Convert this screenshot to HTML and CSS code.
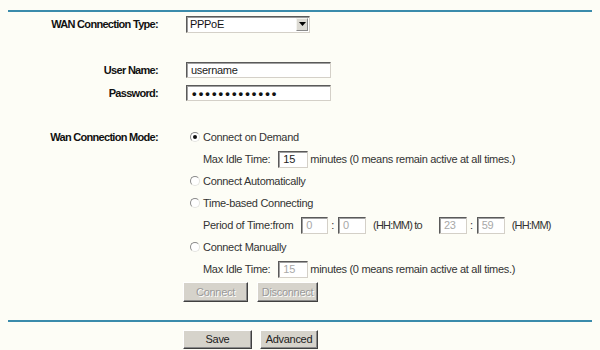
FILE: index.html
```html
<!DOCTYPE html>
<html>
<head>
<meta charset="utf-8">
<link rel="stylesheet" href="styles.css">
</head>
<body>
<div class="page">
  <div class="rule"></div>
  <div class="form">
    <div class="row row-top">
      <div class="label">WAN Connection Type:</div>
      <div class="field">
        <div class="select">
          <span class="select-value">PPPoE</span>
          <span class="select-btn"><svg width="7" height="4" viewBox="0 0 7 4"><path d="M0 0H7L3.5 4Z" fill="#000"/></svg></span>
        </div>
      </div>
    </div>
    <div class="spacer"></div>
    <div class="row row-tall">
      <div class="label">User Name:</div>
      <div class="field"><span class="textbox wide">username</span></div>
    </div>
    <div class="row">
      <div class="label">Password:</div>
      <div class="field"><span class="textbox wide dots">•••••••••••••</span></div>
    </div>
    <div class="spacer"></div>
    <div class="row">
      <div class="label">Wan Connection Mode:</div>
      <div class="field"><span class="radio checked"></span><span>Connect on Demand</span></div>
    </div>
    <div class="row">
      <div></div>
      <div class="field indent"><span>Max Idle Time:</span><span class="textbox small gap-l">15</span><span class="after">minutes (0 means remain active at all times.)</span></div>
    </div>
    <div class="row">
      <div></div>
      <div class="field"><span class="radio"></span><span>Connect Automatically</span></div>
    </div>
    <div class="row">
      <div></div>
      <div class="field"><span class="radio"></span><span>Time-based Connecting</span></div>
    </div>
    <div class="row">
      <div></div>
      <div class="field indent">
        <span>Period of Time:from</span>
        <span class="textbox tiny disabled b1">0</span>
        <span class="colon">:</span>
        <span class="textbox tiny disabled">0</span>
        <span class="hh">(HH:MM) to</span>
        <span class="textbox tiny disabled b3">23</span>
        <span class="colon">:</span>
        <span class="textbox tiny disabled">59</span>
        <span class="hh">(HH:MM)</span>
      </div>
    </div>
    <div class="row">
      <div></div>
      <div class="field"><span class="radio"></span><span>Connect Manually</span></div>
    </div>
    <div class="row">
      <div></div>
      <div class="field indent"><span>Max Idle Time:</span><span class="textbox small gap-l disabled">15</span><span class="after">minutes (0 means remain active at all times.)</span></div>
    </div>
    <div class="row row-btn">
      <div></div>
      <div class="field buttons">
        <span class="btn disabled w-connect">Connect</span>
        <span class="btn disabled w-disconnect">Disconnect</span>
      </div>
    </div>
  </div>
  <div class="rule rule-bottom"></div>
  <div class="actions">
    <div></div>
    <div class="buttons">
      <span class="btn w-save">Save</span>
      <span class="btn w-adv">Advanced</span>
    </div>
  </div>
</div>
</body>
</html>
```

FILE: styles.css
```css
html, body {
  margin: 0;
  padding: 0;
  background: #fdfdf6;
}
body {
  font-family: "Liberation Sans", Arial, sans-serif;
  font-size: 11px;
  color: #333;
  letter-spacing: -0.3px;
}
.page {
  padding: 10px 8px 0 8px;
}
.rule {
  height: 2px;
  background: #3b8bab;
}
.rule-bottom {
  margin-top: 16px;
}
.form {
  display: flex;
  flex-direction: column;
}
.row, .actions {
  display: grid;
  grid-template-columns: 150px 1fr;
  column-gap: 25px;
  align-items: center;
  height: 22px;
}
.row-top { height: 24px; }
.row-tall { height: 24px; }
.row-btn { height: 24px; }
.spacer { height: 22px; }
.label {
  text-align: right;
  font-weight: bold;
  color: #111;
  letter-spacing: -0.7px;
}
.field {
  display: flex;
  align-items: center;
  white-space: nowrap;
}
.indent { padding-left: 20px; }

.select {
  margin-left: 3px;
  width: 124px;
  height: 17px;
  box-sizing: border-box;
  background: #fff;
  border: 1px solid;
  border-color: #5a5a5a #d4d0c8 #d4d0c8 #5a5a5a;
  box-shadow: inset 1px 1px 0 #9a9a9a;
  display: flex;
  align-items: center;
  justify-content: space-between;
  padding: 0 1px 0 3px;
}
.select-value { color: #111; }
.select-btn {
  width: 12px;
  height: 13px;
  box-sizing: border-box;
  background: #dcdad3;
  border: 1px solid;
  border-color: #f4f4f0 #8a8a8a #8a8a8a #f4f4f0;
  display: flex;
  align-items: center;
  justify-content: center;
}

.textbox {
  display: inline-flex;
  align-items: center;
  box-sizing: border-box;
  height: 17px;
  background: #fff;
  border: 1px solid;
  border-color: #5a5a5a #d4d0c8 #d4d0c8 #5a5a5a;
  box-shadow: inset 1px 1px 0 #a0a0a0;
  padding-left: 4px;
  color: #222;
}
.wide {
  margin-left: 3px;
  width: 145px;
  height: 16px;
}
.dots {
  font-size: 13px;
  font-weight: bold;
  letter-spacing: 2.1px;
  color: #111;
  padding-left: 5px;
  line-height: 1;
}
.small { width: 30px; }
.tiny { width: 28px; }
.gap-l { margin-left: 8px; }
.after { margin-left: 2px; }
.disabled { color: #a8a8a8; }
.b1 { margin-left: 8px; width: 27px; }
.b3 { margin-left: 17px; }
.colon { margin: 0 4px 0 3px; }
.hh { margin-left: 7px; letter-spacing: -0.8px; }

.radio {
  width: 10px;
  height: 10px;
  box-sizing: border-box;
  border-radius: 50%;
  border: 1px solid;
  border-color: #8a8a8a #e4e4e0 #e4e4e0 #8a8a8a;
  background: #fff;
  margin-left: 7px;
  margin-right: 3px;
  position: relative;
}
.radio.checked::after {
  content: "";
  position: absolute;
  left: 2px;
  top: 2px;
  width: 4px;
  height: 4px;
  border-radius: 50%;
  background: #111;
}

.buttons {
  display: flex;
  align-items: center;
}
.btn {
  box-sizing: border-box;
  height: 20px;
  display: inline-flex;
  align-items: center;
  justify-content: center;
  background: #d6d3cb;
  border: 1px solid;
  border-color: #ffffff #404040 #404040 #ffffff;
  box-shadow: inset -1px -1px 0 #8a8a8a;
  color: #222;
  font-size: 11px;
}
.btn.disabled {
  color: #9a9a9a;
  text-shadow: 1px 1px 0 #fff;
}
.w-connect { width: 65px; margin-right: 9px; }
.w-disconnect { width: 61px; }
.w-save { width: 69px; margin-right: 8px; height: 19px; }
.w-adv { width: 58px; height: 19px; }
.actions {
  margin-top: 7px;
  height: 20px;
}
```
